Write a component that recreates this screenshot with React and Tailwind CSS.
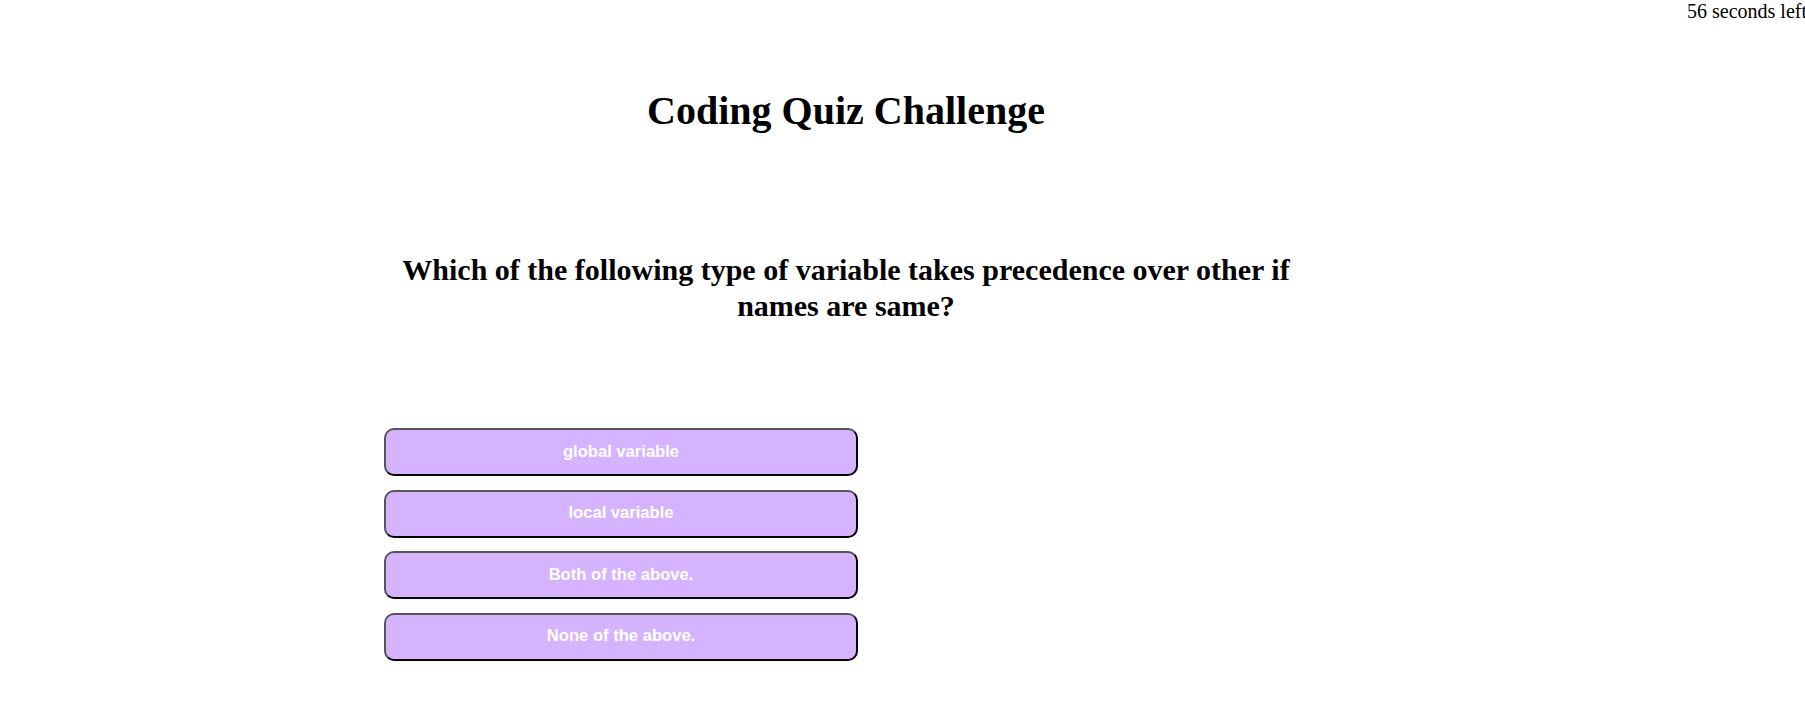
import React from "react";

const answers = [
  "global variable",
  "local variable",
  "Both of the above.",
  "None of the above.",
];

const App = () => {
  return (
    <div className="min-h-[705px] bg-white text-black font-['Liberation_Serif',serif]">
      <div className="flex justify-end h-[22px]">
        <p className="text-[20px] leading-[22px] mr-[-2px]">56 seconds left</p>
      </div>

      <div className="ml-[384px] w-[924px]">
        <h1 className="mt-[66px] text-center text-[40px] leading-[46px] font-bold">
          Coding Quiz Challenge
        </h1>

        <h2 className="mt-[118px] text-center text-[30px] leading-[36px] font-bold">
          Which of the following type of variable takes precedence over other if
          names are same?
        </h2>

        <div className="mt-[104px] flex flex-col gap-[13.5px]">
          {answers.map((a) => (
            <button
              key={a}
              className="w-[474px] h-[48px] rounded-[10px] border-2 border-t-[#555555] border-l-[#555555] border-b-black border-r-black bg-[#d6b3ff] text-white text-[16.6px] font-bold font-['Liberation_Sans',Arial,sans-serif]"
            >
              {a}
            </button>
          ))}
        </div>
      </div>
    </div>
  );
};

export default App;
